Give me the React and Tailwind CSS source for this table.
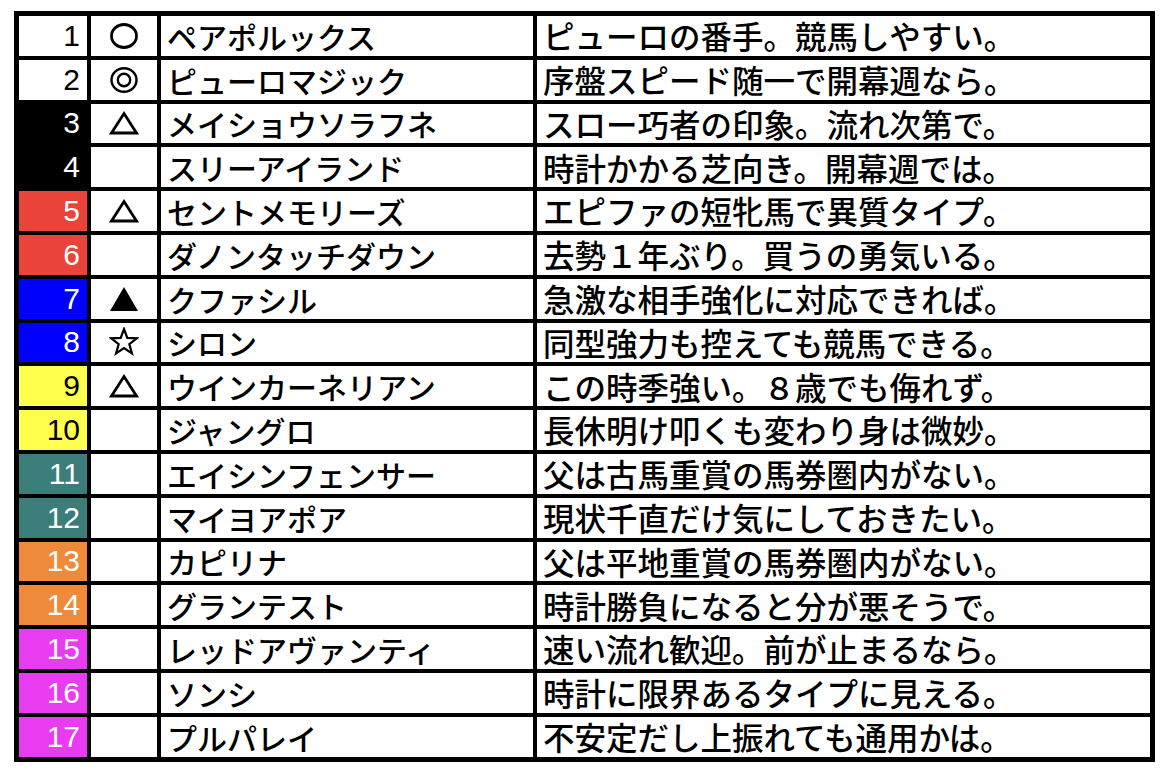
const rows = [
  { no: 1, bg: 'bg-white', fg: 'text-black', mark: 'circle', name: 'ペアポルックス', note: 'ピューロの番手。競馬しやすい。' },
  { no: 2, bg: 'bg-white', fg: 'text-black', mark: 'double', name: 'ピューロマジック', note: '序盤スピード随一で開幕週なら。' },
  { no: 3, bg: 'bg-black', fg: 'text-white', mark: 'tri', name: 'メイショウソラフネ', note: 'スロー巧者の印象。流れ次第で。' },
  { no: 4, bg: 'bg-black', fg: 'text-white', mark: '', name: 'スリーアイランド', note: '時計かかる芝向き。開幕週では。' },
  { no: 5, bg: 'bg-[#e9433a]', fg: 'text-white', mark: 'tri', name: 'セントメモリーズ', note: 'エピファの短牝馬で異質タイプ。' },
  { no: 6, bg: 'bg-[#e9433a]', fg: 'text-white', mark: '', name: 'ダノンタッチダウン', note: '去勢１年ぶり。買うの勇気いる。' },
  { no: 7, bg: 'bg-[#0000ff]', fg: 'text-white', mark: 'solid', name: 'クファシル', note: '急激な相手強化に対応できれば。' },
  { no: 8, bg: 'bg-[#0000ff]', fg: 'text-white', mark: 'star', name: 'シロン', note: '同型強力も控えても競馬できる。' },
  { no: 9, bg: 'bg-[#ffff4d]', fg: 'text-black', mark: 'tri', name: 'ウインカーネリアン', note: 'この時季強い。８歳でも侮れず。' },
  { no: 10, bg: 'bg-[#ffff4d]', fg: 'text-black', mark: '', name: 'ジャングロ', note: '長休明け叩くも変わり身は微妙。' },
  { no: 11, bg: 'bg-[#3a7d79]', fg: 'text-white', mark: '', name: 'エイシンフェンサー', note: '父は古馬重賞の馬券圏内がない。' },
  { no: 12, bg: 'bg-[#3a7d79]', fg: 'text-white', mark: '', name: 'マイヨアポア', note: '現状千直だけ気にしておきたい。' },
  { no: 13, bg: 'bg-[#ef8a3a]', fg: 'text-white', mark: '', name: 'カピリナ', note: '父は平地重賞の馬券圏内がない。' },
  { no: 14, bg: 'bg-[#ef8a3a]', fg: 'text-white', mark: '', name: 'グランテスト', note: '時計勝負になると分が悪そうで。' },
  { no: 15, bg: 'bg-[#e83cf0]', fg: 'text-white', mark: '', name: 'レッドアヴァンティ', note: '速い流れ歓迎。前が止まるなら。' },
  { no: 16, bg: 'bg-[#e83cf0]', fg: 'text-white', mark: '', name: 'ソンシ', note: '時計に限界あるタイプに見える。' },
  { no: 17, bg: 'bg-[#e83cf0]', fg: 'text-white', mark: '', name: 'プルパレイ', note: '不安定だし上振れても通用かは。' },
];

const jp = "font-['Noto_Sans_CJK_JP','Noto_Sans',sans-serif]";

// star outline points
const starPts = Array.from({ length: 10 }, (_, i) => {
  const r = i % 2 === 0 ? 13.5 : 5.6;
  const a = -Math.PI / 2 + (i * Math.PI) / 5;
  return `${(15 + r * Math.cos(a)).toFixed(2)},${(15.5 + r * Math.sin(a)).toFixed(2)}`;
}).join(' ');

function Mark({ type }) {
  if (!type) return null;
  return (
    <svg width="30" height="30" viewBox="0 0 30 30" className="mx-auto block">
      {type === 'circle' && <ellipse cx="15" cy="15" rx="12.5" ry="11.5" fill="none" stroke="black" strokeWidth="2.8" />}
      {type === 'double' && (
        <>
          <ellipse cx="15" cy="15" rx="12.5" ry="11.8" fill="none" stroke="black" strokeWidth="2.4" />
          <circle cx="15" cy="15" r="6.2" fill="none" stroke="black" strokeWidth="2.4" />
        </>
      )}
      {type === 'tri' && <polygon points="15,5.5 27.5,25 2.5,25" fill="none" stroke="black" strokeWidth="2.8" />}
      {type === 'solid' && <polygon points="15,3 29,27 1,27" fill="black" />}
      {type === 'star' && <polygon points={starPts} fill="none" stroke="black" strokeWidth="2.2" strokeLinejoin="miter" />}
    </svg>
  );
}

export default function App() {
  return (
    <div className="w-[1172px] h-[776px] bg-white pt-[11px] pl-[14px]">
      <table className="border-separate border-spacing-[4px] bg-black border border-black">
        <tbody>
          {rows.map((r) => (
            <tr key={r.no} className="h-[39.8px]">
              <td className={`${r.bg} ${r.fg} w-[68px] p-0 pr-[7px] text-right align-middle font-['Liberation_Sans',sans-serif] text-[30px] leading-none`}>
                {r.no}
              </td>
              <td className="bg-white w-[66px] p-0 align-middle">
                <Mark type={r.mark} />
              </td>
              <td className={`bg-white w-[372px] p-0 pl-[6px] align-middle text-black text-[30px] font-medium leading-none whitespace-nowrap ${jp}`}>
                {r.name}
              </td>
              <td className={`bg-white w-[613px] p-0 pl-[6px] align-middle text-black text-[31.5px] font-medium leading-none whitespace-nowrap ${jp}`}>
                {r.note}
              </td>
            </tr>
          ))}
        </tbody>
      </table>
    </div>
  );
}
